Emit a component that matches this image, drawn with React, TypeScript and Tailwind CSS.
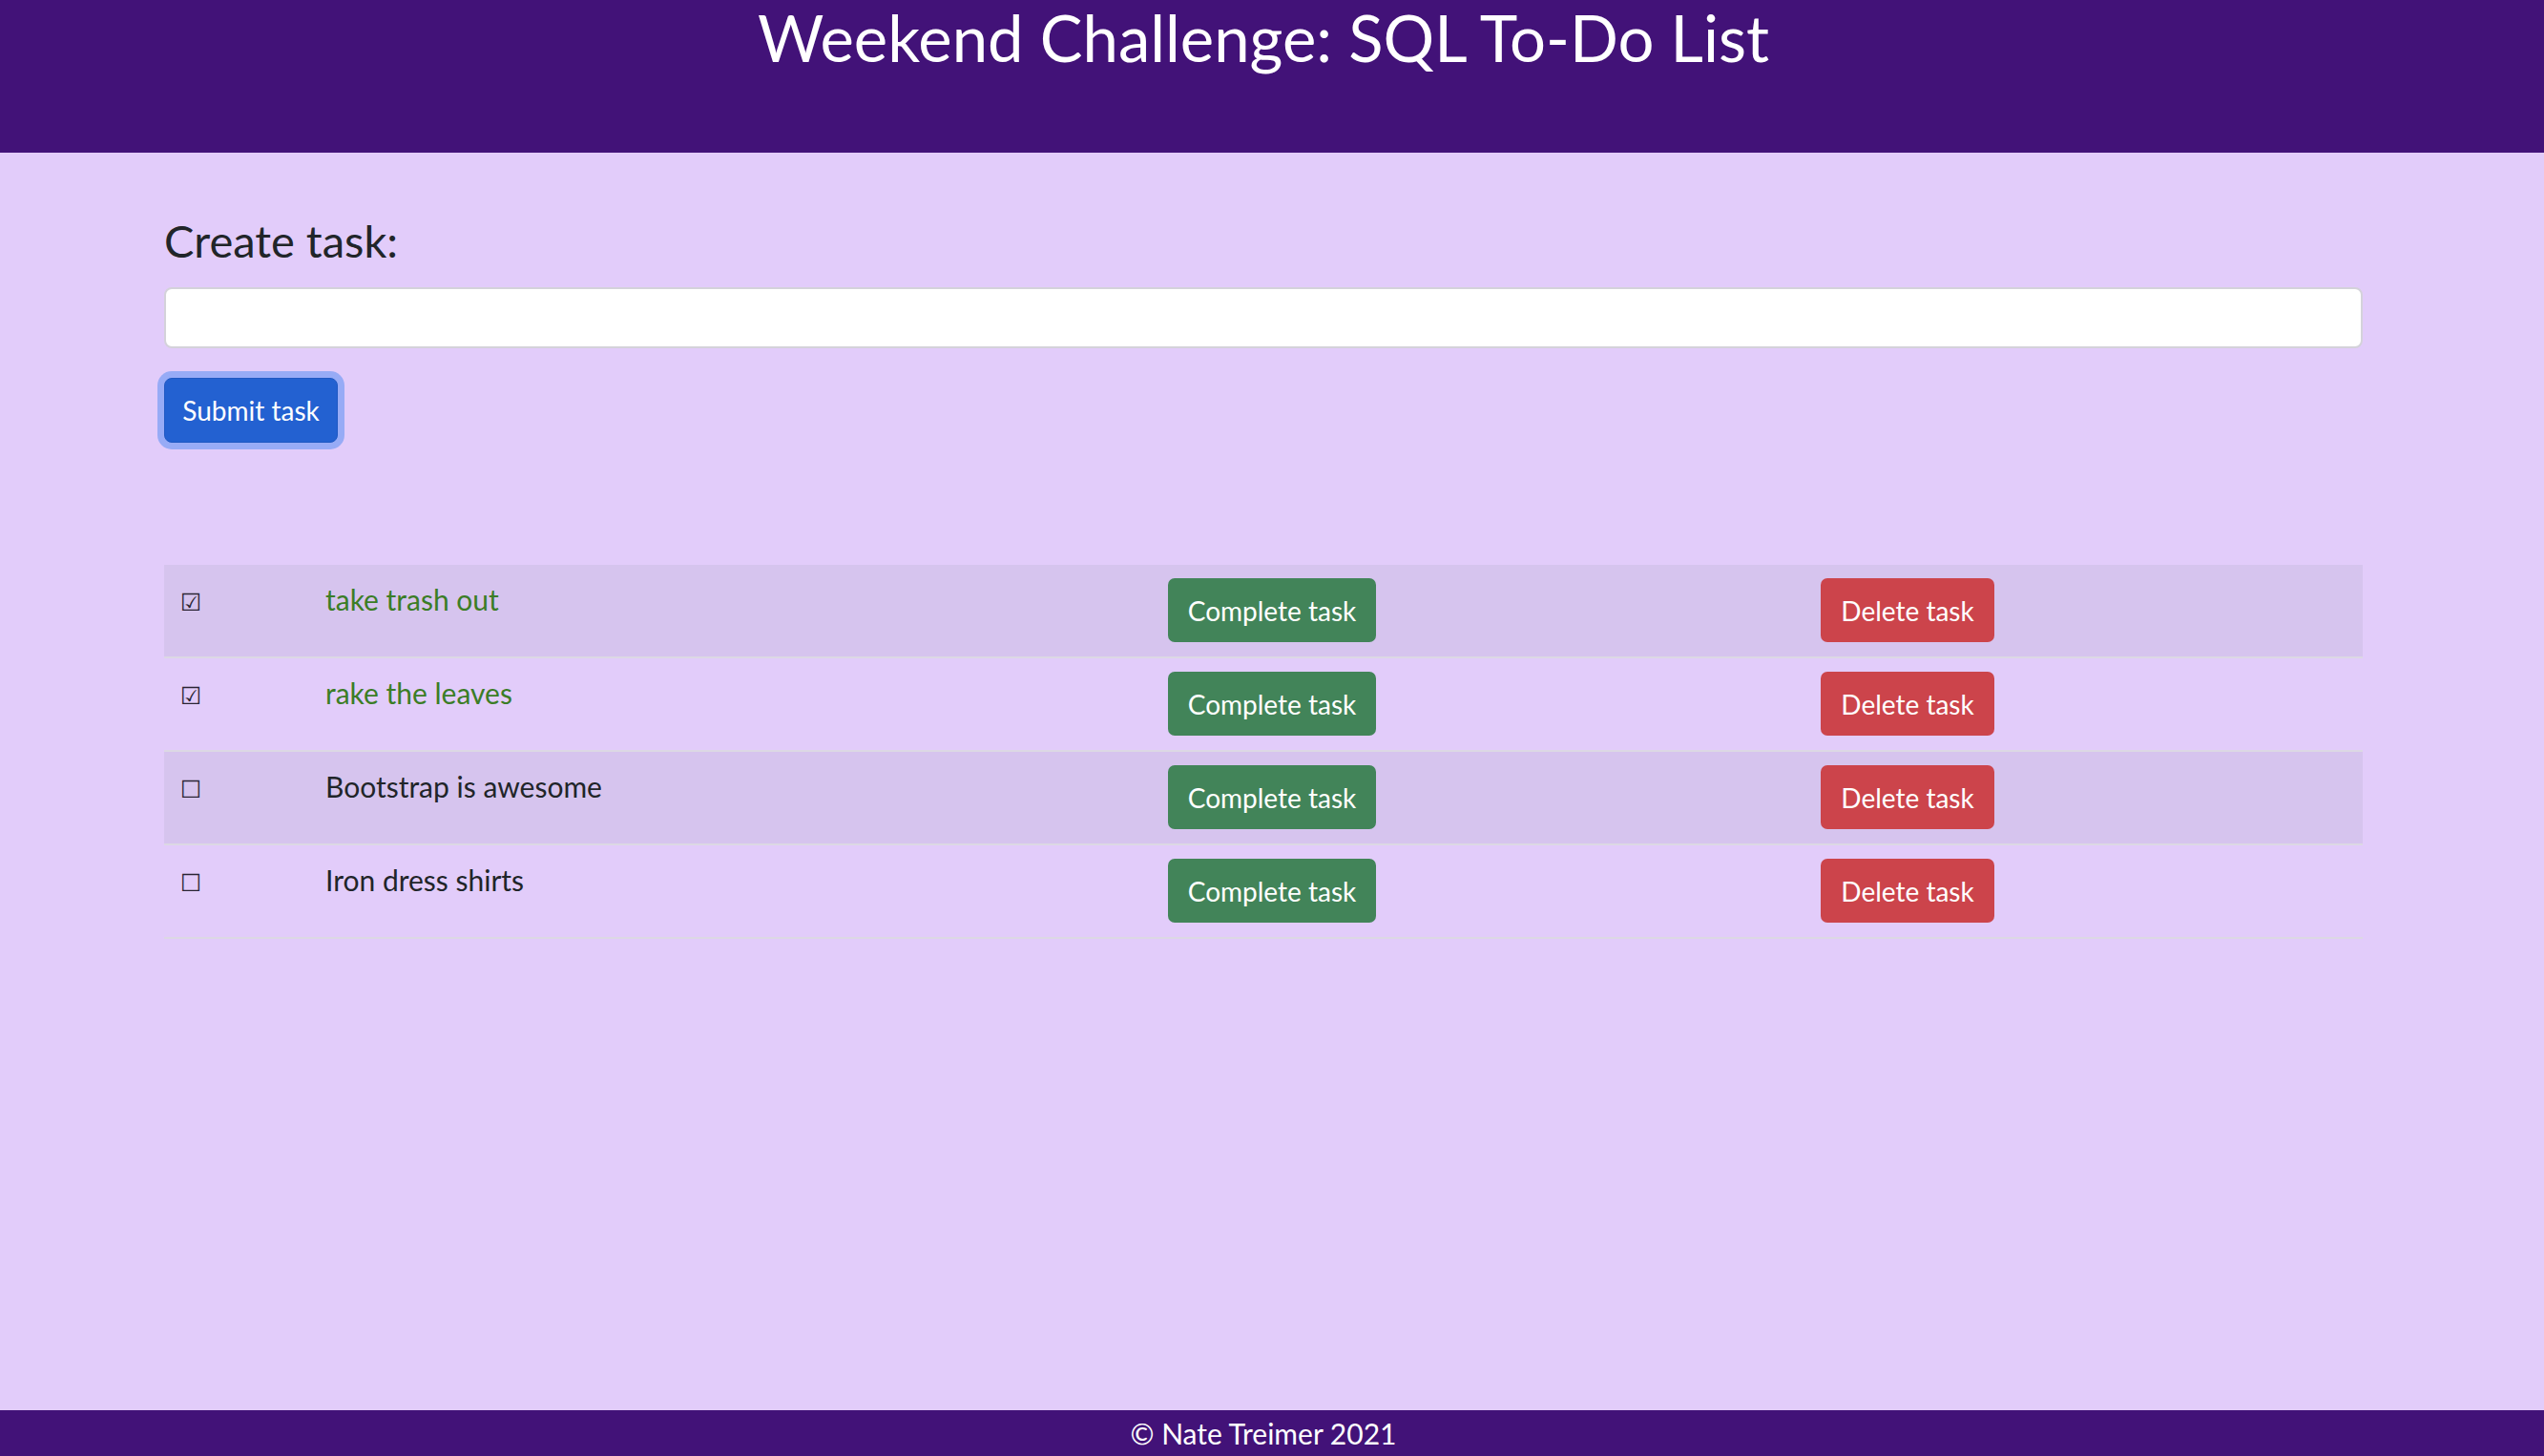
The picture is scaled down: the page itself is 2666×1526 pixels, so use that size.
import React from "react";

type Task = { id: number; text: string; done: boolean };

const tasks: Task[] = [
  { id: 1, text: "take trash out", done: true },
  { id: 2, text: "rake the leaves", done: true },
  { id: 3, text: "Bootstrap is awesome", done: false },
  { id: 4, text: "Iron dress shirts", done: false },
];

const TaskRow: React.FC<{ task: Task; striped: boolean }> = ({ task, striped }) => {
  return (
    <div
      className={`grid grid-cols-[153px_883px_684px_1fr] border-b-2 border-[#dcd8e4] h-[98px] ${
        striped ? "bg-[#d6c4ee]" : "bg-[#e2ccfa]"
      }`}
    >
      <div className="pl-[17px] pt-[15px] text-[30px] leading-[42px] text-[#2a2433]">
        <span className="font-['DejaVu_Sans',sans-serif] text-[25px]">{task.done ? "☑" : "☐"}</span>
      </div>
      <div
        className={`pl-[16px] pt-[15px] text-[30px] leading-[42px] ${
          task.done ? "text-[#3b7d26]" : "text-[#212529]"
        }`}
      >
        {task.text}
      </div>
      <div className="pl-[16px] pt-[14px]">
        <button className="w-[218px] h-[67px] rounded-[7px] bg-[#428459] text-white text-[28px] leading-none flex items-center justify-center">
          Complete task
        </button>
      </div>
      <div className="pl-[16px] pt-[14px]">
        <button className="w-[182px] h-[67px] rounded-[7px] bg-[#cc444b] text-white text-[28px] leading-none flex items-center justify-center">
          Delete task
        </button>
      </div>
    </div>
  );
};

export default function App() {
  return (
    <div className="min-h-screen flex flex-col bg-[#e2ccfa] font-['Lato',sans-serif] text-[#212529]">
      <header className="h-[160px] bg-[#421278] text-white text-center pr-[18px]">
        <h1 className="pt-[6px] text-[67px] leading-none">Weekend Challenge: SQL To-Do List</h1>
      </header>

      <main className="flex-1 pl-[172px] pr-[190px]">
        <h3 className="mt-[69px] text-[47px] leading-none">Create task:</h3>
        <input
          type="text"
          className="mt-[25px] block w-full h-[64px] rounded-[8px] border-2 border-[#d4d2da] bg-white"
        />
        <button className="mt-[31px] w-[182px] h-[68px] rounded-[8px] bg-[#2361d1] border border-[#1f58c2] text-white text-[28px] leading-none flex items-center justify-center ring-[7px] ring-[#97abf6]">
          Submit task
        </button>

        <div className="mt-[128px]">
          {tasks.map((t, i) => (
            <TaskRow key={t.id} task={t} striped={i % 2 === 0} />
          ))}
        </div>
      </main>

      <footer className="h-[48px] bg-[#421278] text-white text-center text-[30px] leading-[48px] pr-[18px]">
        © Nate Treimer 2021
      </footer>
    </div>
  );
}
